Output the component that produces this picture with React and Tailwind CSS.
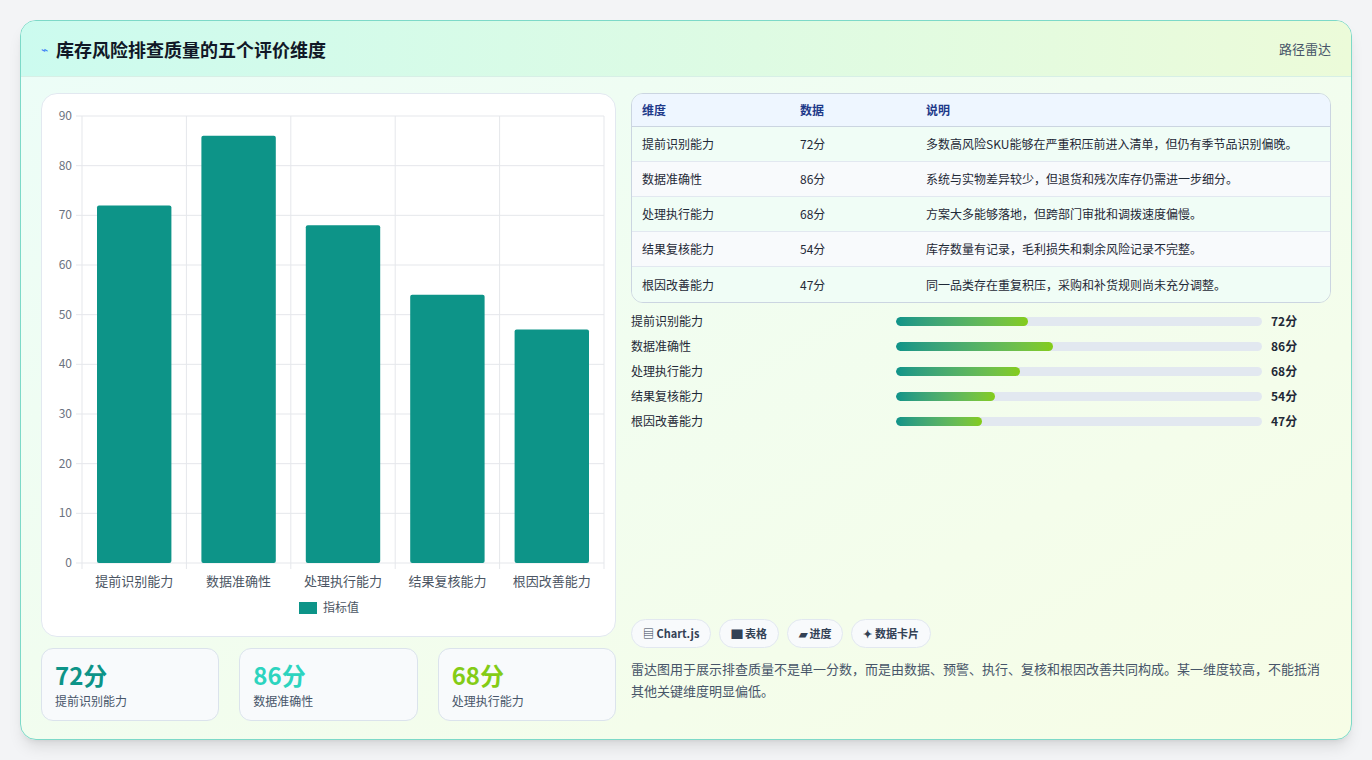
const dims = [
  { name: "提前识别能力", v: 72, d: "多数高风险SKU能够在严重积压前进入清单，但仍有季节品识别偏晚。" },
  { name: "数据准确性", v: 86, d: "系统与实物差异较少，但退货和残次库存仍需进一步细分。" },
  { name: "处理执行能力", v: 68, d: "方案大多能够落地，但跨部门审批和调拨速度偏慢。" },
  { name: "结果复核能力", v: 54, d: "库存数量有记录，毛利损失和剩余风险记录不完整。" },
  { name: "根因改善能力", v: 47, d: "同一品类存在重复积压，采购和补货规则尚未充分调整。" },
];

function Chart() {
  // plot area in svg coords (card origin at 40,93)
  const x0 = 40, x1 = 562, y0 = 22, y1 = 469;
  const step = (y1 - y0) / 9;
  const cw = (x1 - x0) / 5;
  return (
    <svg width="574" height="543" className="block">
      {Array.from({ length: 10 }).map((_, i) => {
        const y = y1 - i * step;
        return (
          <g key={i}>
            <line x1={x0 - 6} x2={x1} y1={y} y2={y} stroke="#e5e7eb" />
            <text x={x0 - 10} y={y + 4} textAnchor="end" fontSize="12" fill="#6b7280">{i * 10}</text>
          </g>
        );
      })}
      {Array.from({ length: 6 }).map((_, i) => (
        <line key={i} x1={x0 + i * cw} x2={x0 + i * cw} y1={y0} y2={y1 + 6} stroke="#e5e7eb" />
      ))}
      {dims.map((d, i) => {
        const h = (d.v / 90) * (y1 - y0);
        return (
          <g key={d.name}>
            <rect x={x0 + i * cw + 15} y={y1 - h} width={cw - 30} height={h} rx="2" fill="#0d9488" />
            <text x={x0 + i * cw + cw / 2} y={y1 + 23} textAnchor="middle" fontSize="13" fill="#4b5563">{d.name}</text>
          </g>
        );
      })}
      <rect x="257" y="508" width="18" height="12" fill="#0d9488" />
      <text x="281" y="518" fontSize="12" fill="#4b5563">指标值</text>
    </svg>
  );
}

export default function App() {
  return (
    <div className="w-[1372px] h-[760px] bg-[#f3f4f6] pt-5 px-5" style={{ fontFamily: '"Noto Sans CJK SC", "Noto Sans", sans-serif' }}>
      <div className="h-[720px] rounded-2xl border border-[#7dd9c8] bg-gradient-to-br from-[#ecfdf8] to-[#f7fde6] shadow-lg overflow-hidden">
        <div className="h-[56px] flex items-center justify-between px-5 bg-gradient-to-r from-[#ccfbef] to-[#ecfbd9] border-b border-[#d7efe6]">
          <div className="flex items-center gap-2">
            <span className="text-[#3b82f6] text-xs">⌁</span>
            <h1 className="text-lg font-bold text-[#111827]">库存风险排查质量的五个评价维度</h1>
          </div>
          <span className="text-[13px] text-[#475569]">路径雷达</span>
        </div>
        <div className="flex gap-[15px] px-5 pt-4">
          <div className="w-[575px] flex flex-col gap-[11px]">
            <div className="h-[544px] bg-white rounded-2xl border border-[#e2e8f0]">
              <Chart />
            </div>
            <div className="grid grid-cols-3 gap-[20px] h-[73px]">
              {[
                ["72分", "提前识别能力", "text-[#0d9488]"],
                ["86分", "数据准确性", "text-[#2dd4bf]"],
                ["68分", "处理执行能力", "text-[#84cc16]"],
              ].map(([v, l, c]) => (
                <div key={l} className="bg-[#f8fafc] rounded-xl border border-[#dbe3ec] px-[13px] pt-[10px]">
                  <div className={`text-2xl font-bold ${c} leading-8`}>{v}</div>
                  <div className="text-xs text-[#475569] mt-0.5">{l}</div>
                </div>
              ))}
            </div>
          </div>
          <div className="w-[704px] flex flex-col">
            <div className="rounded-xl border border-[#cbd5e1] overflow-hidden text-xs text-[#1f2937]">
              <div className="flex h-[33px] items-center bg-[#eef6ff] text-[#1e3a8a] font-semibold border-b border-[#cbd5e1]">
                <div className="w-[168px] pl-[10px]">维度</div>
                <div className="w-[126px]">数据</div>
                <div>说明</div>
              </div>
              {dims.map((d, i) => (
                <div key={d.name} className={`flex h-[35px] items-center ${i % 2 ? "bg-[#f8fafc]" : "bg-[#f0fdf6]"} ${i < 4 ? "border-b border-[#e2e8f0]" : ""}`}>
                  <div className="w-[168px] pl-[10px]">{d.name}</div>
                  <div className="w-[126px]">{d.v}分</div>
                  <div>{d.d}</div>
                </div>
              ))}
            </div>
            <div className="mt-[10px] flex flex-col gap-[9px]">
              {dims.map((d) => (
                <div key={d.name} className="flex items-center h-4 text-xs text-[#1f2937]">
                  <div className="w-[265px]">{d.name}</div>
                  <div className="w-[366px] h-[9px] rounded-full bg-[#e2e8f0] overflow-hidden">
                    <div className="h-full rounded-full bg-gradient-to-r from-[#0d9488] to-[#84cc16]" style={{ width: `${d.v / 2}%` }} />
                  </div>
                  <div className="ml-[9px] font-bold">{d.v}分</div>
                </div>
              ))}
            </div>
            <div className="mt-auto flex gap-2 text-[11px] font-semibold text-[#334155]">
              {["▤ Chart.js", "▇ 表格", "▰ 进度", "✦ 数据卡片"].map((t) => (
                <span key={t} className="h-[29px] px-[11px] flex items-center rounded-full border border-[#e2e8f0] bg-[#f8fafc]">{t}</span>
              ))}
            </div>
            <p className="mt-[10px] text-[13px] leading-[22px] text-[#475569] mb-[19px]">
              雷达图用于展示排查质量不是单一分数，而是由数据、预警、执行、复核和根因改善共同构成。某一维度较高，不能抵消其他关键维度明显偏低。
            </p>
          </div>
        </div>
      </div>
    </div>
  );
}
